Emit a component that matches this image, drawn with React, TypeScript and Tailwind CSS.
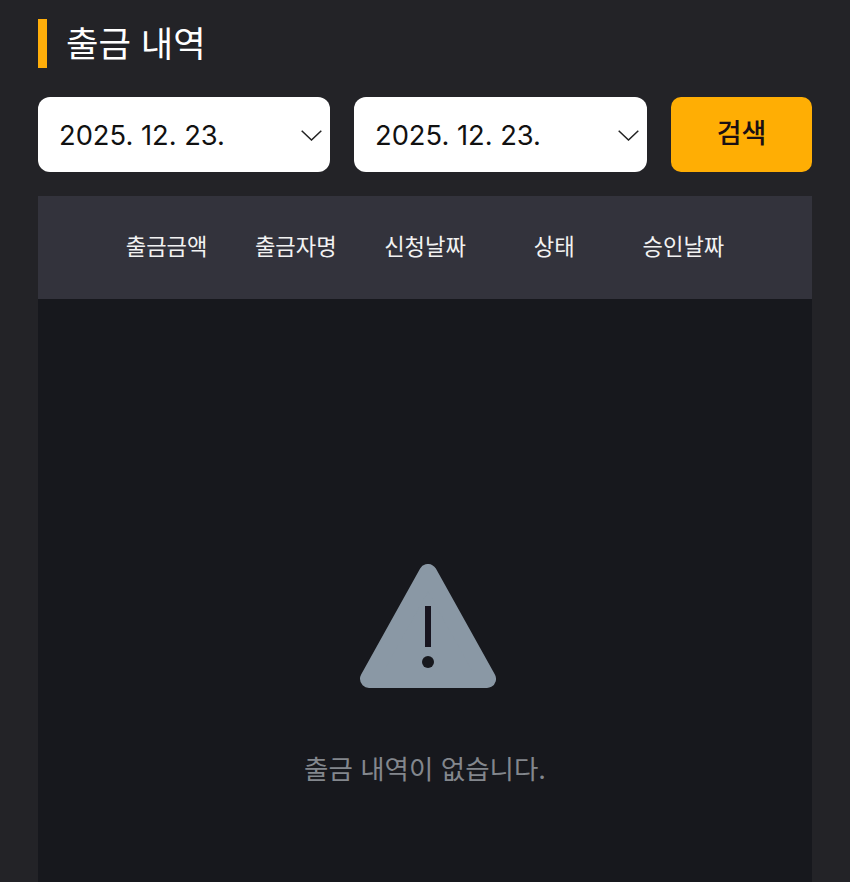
const fontStack = { fontFamily: "'Inter', 'Noto Sans CJK KR', sans-serif" }

const columns = ["출금금액", "출금자명", "신청날짜", "상태", "승인날짜"]

function DateSelect({ width }: { width: string }) {
  return (
    <div className={`flex h-[75px] ${width} items-center justify-between rounded-[12px] bg-white pl-[21px] pr-[8px] text-[27.3px] text-[#111111]`}>
      <span className="pt-[3px]">2025. 12. 23.</span>
      <svg className="mt-[1px]" width="21" height="11" viewBox="0 0 21 11" fill="none" stroke="#222222" strokeWidth="1.5">
        <path d="M0.7 0.7 L10.5 10 L20.3 0.7" />
      </svg>
    </div>
  )
}

export default function App() {
  return (
    <div className="h-[882px] overflow-hidden bg-[#232327] px-[38px] pt-[19px]" style={fontStack}>
      {/* Title */}
      <div className="flex h-[49px] items-center gap-[19px]">
        <span className="h-[49px] w-[9px] bg-[#ffae0a]" />
        <h1 className="pt-[3px] text-[35.3px] font-normal text-white">출금 내역</h1>
      </div>

      {/* Filters */}
      <div className="mt-[29px] flex gap-[24px]">
        <DateSelect width="w-[292px]" />
        <DateSelect width="w-[293px]" />
        <button className="h-[75px] w-[141px] rounded-[10px] bg-[#ffae04] text-[27px] font-medium text-[#1a1013]">
          검색
        </button>
      </div>

      {/* Table */}
      <div className="mt-[24px] h-[686px] bg-[#17181d]">
        <div className="grid h-[103px] grid-cols-5 items-center bg-[#33333c] px-[64px] pb-[2px] text-center text-[22.2px] font-normal text-[#f2f2f2]">
          {columns.map((label) => (
            <span key={label}>{label}</span>
          ))}
        </div>
        <div className="flex flex-col items-center pt-[265px]">
          <svg className="ml-[6px]" width="136" height="124" viewBox="0 0 136 124">
            <path
              d="M68 9 L127 115 H9 Z"
              fill="#8a98a5"
              stroke="#8a98a5"
              strokeWidth="18"
              strokeLinejoin="round"
            />
            <rect x="65" y="42" width="6" height="41" fill="#17141f" />
            <circle cx="68" cy="98" r="6" fill="#17181d" />
          </svg>
          <p className="mt-[62px] text-[26.5px] text-[#83878d]">출금 내역이 없습니다.</p>
        </div>
      </div>
    </div>
  )
}
